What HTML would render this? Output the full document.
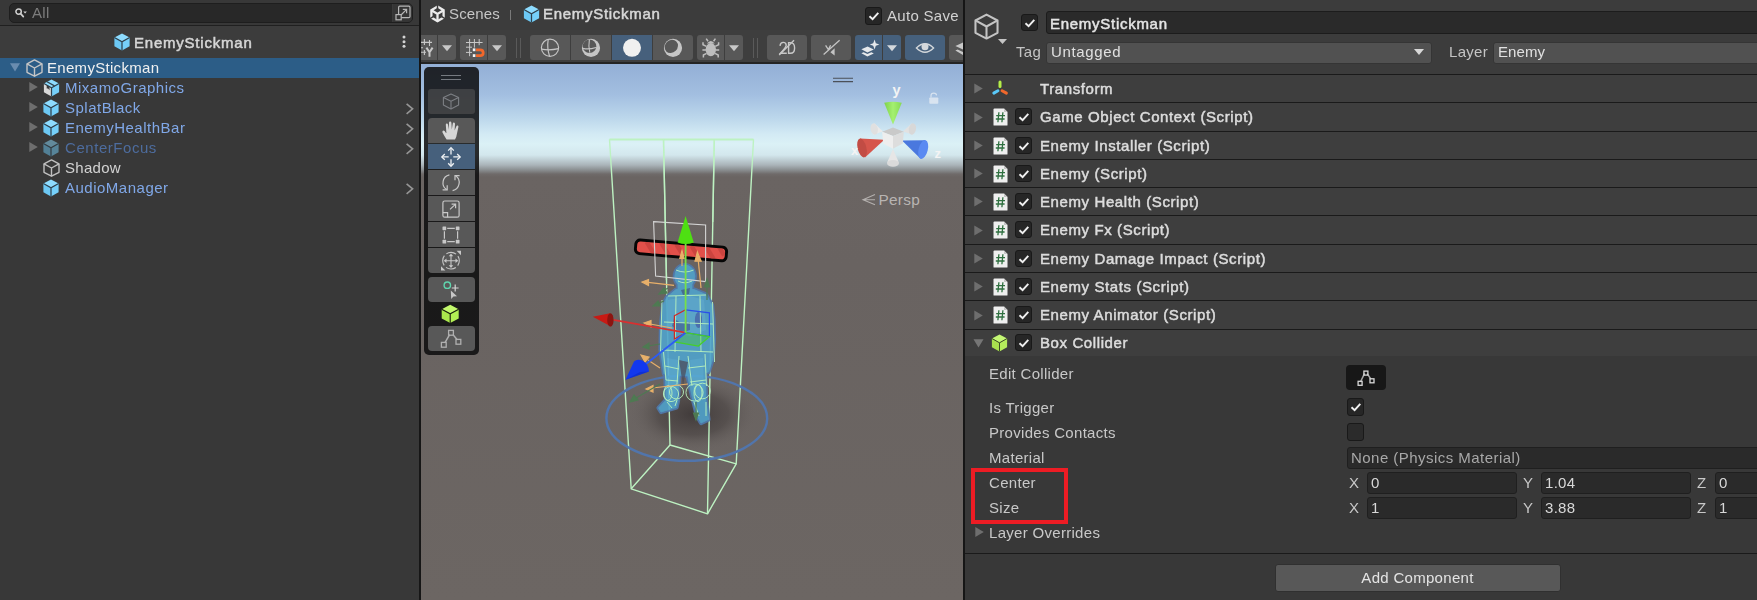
<!DOCTYPE html>
<html><head><meta charset="utf-8"><title>Unity Editor</title>
<style>
*{box-sizing:border-box;margin:0;padding:0}
html,body{width:1757px;height:600px;overflow:hidden;background:#383838}
body{position:relative;font-family:"Liberation Sans",sans-serif;font-size:15px;color:#c8c8c8;letter-spacing:.3px}
.abs,.abs>*{position:absolute}
.t{position:absolute;white-space:nowrap;line-height:20px;height:20px;will-change:transform}
.b{font-weight:400;-webkit-text-stroke:.5px currentColor;letter-spacing:.6px}
svg{position:absolute;overflow:visible}
/* hierarchy */
#hier{position:absolute;left:0;top:0;width:419px;height:600px;background:#383838}
.pf{color:#80a8e8;letter-spacing:.5px}
.pfd{color:#4d6c9e;letter-spacing:.55px}
/* scene */
#scene{position:absolute;left:421px;top:0;width:542px;height:600px;background:#3c3c3c;overflow:hidden}
/* inspector */
#insp{position:absolute;left:965px;top:0;width:792px;height:600px;background:#383838;overflow:hidden}
.hl{position:absolute;left:0;width:792px;height:1px;background:#1a1a1a}
.hrow{position:absolute;left:0;width:792px;background:#3e3e3e}
.cb{position:absolute;width:17px;height:17px;background:#262626;border:1px solid #191919;border-radius:3px}
.fld{position:absolute;background:#2a2a2a;border:1px solid #1f1f1f;border-radius:3px;height:22px}
.fld .t{left:2.6px;top:0}
.tb{position:absolute;top:35px;height:25px;background:#585858;border-radius:3px}
.tb.on,.ob.on{background:#46607c}
.tsep{position:absolute;top:38px;width:1px;height:20px;background:#5a5a5a}
.ob{position:absolute;left:7px;width:47px;height:25px;background:#585858}
</style></head><body>
<svg width="0" height="0" style="position:absolute"><defs>
 <g id="pfcube"><path d="M8 .4L15.6 4.5L8 8.8L.4 4.5z" fill="#8ddcff"/><path d="M.4 4.5L8 8.8V17.6L.4 13.3z" fill="#6cc8f4"/><path d="M15.6 4.5V13.3L8 17.6V8.8z" fill="#76d0fa"/><path d="M.4 4.5L8 8.8L15.6 4.5M8 8.8V17.6" fill="none" stroke="#30424e" stroke-width="1.25"/></g>
 <g id="gocube" fill="none" stroke-width="1.4" stroke-linejoin="round"><path d="M8.5 .9L16 4.9V13.3L8.5 17.2L1 13.3V4.9z"/><path d="M1 4.9L8.5 9L16 4.9M8.5 9V17.2"/></g>
 <g id="pfmodel"><path d="M8 .4L15.6 4.5L8 8.8L.4 4.5z" fill="#8ddcff"/><path d="M.4 4.5L8 8.8V17.6L.4 13.3z" fill="#d8d8d8"/><path d="M15.6 4.5V13.3L8 17.6V8.8z" fill="#76d0fa"/><path d="M.4 4.5L8 8.8L15.6 4.5M8 8.8V17.6" fill="none" stroke="#30424e" stroke-width="1.25"/><path d="M3.2 6.1L6 7.7V11.2L4.6 9.6L3.2 9.6z" fill="#3a3a3a"/><path d="M3.5 2.8L11 6.9" stroke="#30424e" stroke-width="1.25"/></g>
 <g id="unity"><g fill="none" stroke="#ececec" stroke-width="2.3" stroke-linejoin="miter"><path d="M7.5 1.6L13.6 5.2V12.6L7.5 16.2L1.4 12.6V5.2z"/><path d="M1.4 5.2L7.5 9L13.6 5.2M7.5 9V16.2"/></g><path d="M7.5 0V4.8M0 13.6L3.6 11.4M15 13.6L11.4 11.4" stroke="#3c3c3c" stroke-width="1.5" fill="none"/></g>
 <path id="tri" d="M.3 0L8.8 5L.3 10z" fill="#6e6e6e"/>
 <path id="chev" d="M1.6 .8L7.6 5.8L1.6 10.8" fill="none" stroke="#969696" stroke-width="1.6"/>
 <path id="chk" d="M1.5 5.2L4.6 8.2L10.3 1.8" fill="none" stroke="#f0f0f0" stroke-width="1.9"/>
</defs></svg>
<svg width="0" height="0" style="position:absolute"><defs>
 <g id="xform" fill="none" stroke-width="3" stroke-linecap="round"><path d="M9 2V6.4" stroke="#b4ee48"/><path d="M6.9 10.7L2.8 13.1" stroke="#5ac8f8"/><path d="M11.1 10.7L15.4 13.1" stroke="#f0682c"/></g>
 <g id="script"><path d="M1.5 .5H11L14.5 4V17Q14.5 17.5 14 17.5H1Q.5 17.5 .5 17V1.5Q.5 .5 1.5 .5z" fill="#efefef"/><path d="M11 .5V4H14.5z" fill="#c4c4c4"/><path d="M5.9 4.2L4.9 14.2M9.9 4.2L8.9 14.2M3.2 7.6H12M2.8 11H11.6" stroke="#2f7040" stroke-width="1.3" fill="none"/></g>
 <g id="gcube"><path d="M8 .4L15.6 4.5L8 8.8L.4 4.5z" fill="#c4f774"/><path d="M.4 4.5L8 8.8V17.6L.4 13.3z" fill="#a8e04e"/><path d="M15.6 4.5V13.3L8 17.6V8.8z" fill="#b4ec5c"/><path d="M.4 4.5L8 8.8L15.6 4.5M8 8.8V17.6" fill="none" stroke="#3c4c26" stroke-width="1"/></g>
 <g id="editcol" fill="none" stroke-width="1.3"><path d="M3.4 13L7.6 4.4M10.2 4.6L13.8 10" stroke-width="1.5" stroke-opacity=".75"/><rect x="6.9" y="2.1" width="4" height="4"/><rect x="1.1" y="12.3" width="4" height="4"/><rect x="13" y="9.8" width="4" height="4"/></g>
</defs></svg>
<div id="hier">
 <!-- search -->
 <div style="position:absolute;left:9px;top:3px;width:404px;height:20px;background:#282828;border:1px solid #1e1e1e;border-radius:5px"></div>
 <svg style="left:14px;top:7px" width="14" height="12" viewBox="0 0 14 12"><circle cx="4.6" cy="4.6" r="2.7" fill="none" stroke="#d0d0d0" stroke-width="1.5"/><path d="M6.6 6.6L9.3 9.6" stroke="#d0d0d0" stroke-width="1.7" stroke-linecap="round"/><path d="M9.3 4.6h3.6l-1.8 2z" fill="#d0d0d0"/></svg>
 <div class="t" style="left:32px;top:3px;color:#7c7c7c">All</div>
 <div style="position:absolute;left:392px;top:4px;width:1px;height:18px;background:#3a3a3a"></div>
 <div style="position:absolute;left:393px;top:4px;width:19px;height:18px;background:#353535;border-radius:0 4px 4px 0"></div>
 <svg style="left:395px;top:5px" width="16" height="16" viewBox="0 0 16 16"><g fill="none" stroke="#b6b6b6" stroke-width="1.2"><rect x="3.6" y="1.2" width="11.4" height="11.4" rx="1.2"/><rect x="1" y="9.6" width="5.2" height="5.2" fill="#353535"/><path d="M6 10L11.4 4.6M7.8 4.4H11.6V8.2"/></g></svg>
 <div style="position:absolute;left:0;top:24.5px;width:419px;height:1.2px;background:#202020"></div>
 <!-- header -->
 <div style="position:absolute;left:0;top:26px;width:419px;height:32px;background:#3c3c3c"></div>
 <svg style="left:114px;top:33px" width="16" height="18" viewBox="0 0 16 18"><use href="#pfcube"/></svg>
 <div class="t b" style="left:134px;top:33.4px;color:#d6d6d6;letter-spacing:.78px">EnemyStickman</div>
 <svg style="left:402px;top:35px" width="4" height="14" viewBox="0 0 4 14"><circle cx="2" cy="2" r="1.5" fill="#d4d4d4"/><circle cx="2" cy="6.7" r="1.5" fill="#d4d4d4"/><circle cx="2" cy="11.3" r="1.5" fill="#d4d4d4"/></svg>
 <!-- rows -->
 <div style="position:absolute;left:0;top:58px;width:419px;height:20px;background:#2c5d87"></div>
 <svg style="left:10px;top:63px" width="10" height="9" viewBox="0 0 10 9"><path d="M0 .3H10L5 8.6z" fill="#6a8caf"/></svg>
 <svg style="left:26px;top:59px" width="17" height="18" viewBox="0 0 17 18"><use href="#gocube" stroke="#c6c6c6"/></svg>
 <div class="t" style="left:47px;top:58px;color:#f0f0f0">EnemyStickman</div>

 <svg style="left:29px;top:82px" width="9" height="10" viewBox="0 0 9 10"><use href="#tri"/></svg>
 <svg style="left:43px;top:79px" width="17" height="18" viewBox="0 0 16 18"><use href="#pfmodel"/></svg>
 <div class="t pf" style="left:65px;top:78px">MixamoGraphics</div>

 <svg style="left:29px;top:102px" width="9" height="10" viewBox="0 0 9 10"><use href="#tri"/></svg>
 <svg style="left:43px;top:99px" width="16" height="18" viewBox="0 0 16 18"><use href="#pfcube"/></svg>
 <div class="t pf" style="left:65px;top:98px">SplatBlack</div>
 <svg style="left:405px;top:103px" width="8" height="11" viewBox="0 0 8 11"><use href="#chev"/></svg>

 <svg style="left:29px;top:122px" width="9" height="10" viewBox="0 0 9 10"><use href="#tri"/></svg>
 <svg style="left:43px;top:119px" width="16" height="18" viewBox="0 0 16 18"><use href="#pfcube"/></svg>
 <div class="t pf" style="left:65px;top:118px">EnemyHealthBar</div>
 <svg style="left:405px;top:123px" width="8" height="11" viewBox="0 0 8 11"><use href="#chev"/></svg>

 <svg style="left:29px;top:142px" width="9" height="10" viewBox="0 0 9 10"><use href="#tri"/></svg>
 <svg style="left:43px;top:139px;opacity:.5" width="16" height="18" viewBox="0 0 16 18"><use href="#pfcube"/></svg>
 <div class="t pfd" style="left:65px;top:138px">CenterFocus</div>
 <svg style="left:405px;top:143px" width="8" height="11" viewBox="0 0 8 11"><use href="#chev"/></svg>

 <svg style="left:43px;top:159px" width="17" height="18" viewBox="0 0 17 18"><use href="#gocube" stroke="#c0c0c0"/></svg>
 <div class="t" style="left:65px;top:158px;color:#d2d2d2">Shadow</div>

 <svg style="left:43px;top:179px" width="16" height="18" viewBox="0 0 16 18"><use href="#pfcube"/></svg>
 <div class="t pf" style="left:65px;top:178px">AudioManager</div>
 <svg style="left:405px;top:183px" width="8" height="11" viewBox="0 0 8 11"><use href="#chev"/></svg>
</div>
<div style="position:absolute;left:419px;top:0;width:2px;height:600px;background:#161616"></div>

<div id="scene">
<!-- all coordinates in page px via shifted svg -->
<div style="position:absolute;left:0;top:64px;width:542px;height:536px;background:linear-gradient(to bottom,#93afd6 0px,#a2bee0 30px,#bdd8ec 55px,#d3eaf4 70px,#dbf1f6 80px,#d3e7ed 91px,#aab4b9 101px,#8a8e90 106px,#6f6b6a 110px,#6a6462 113px,#696361 200px,#6c6663 536px)"></div>
<svg style="left:-421px;top:0" width="1757" height="600" viewBox="0 0 1757 600">
<defs>
 <radialGradient id="shd"><stop offset="0" stop-color="#3a3434" stop-opacity=".85"/><stop offset=".55" stop-color="#453f3e" stop-opacity=".55"/><stop offset="1" stop-color="#6a6462" stop-opacity="0"/></radialGradient>
 <filter id="bl1"><feGaussianBlur stdDeviation=".6"/></filter>
 <filter id="bl2"><feGaussianBlur stdDeviation="1.2"/></filter>
 <linearGradient id="gcone" x1="0" x2="1"><stop offset="0" stop-color="#7ed24c"/><stop offset=".5" stop-color="#a4f070"/><stop offset="1" stop-color="#86da54"/></linearGradient>
</defs>
<!-- shadow -->
<ellipse cx="693" cy="414" rx="64" ry="38" fill="url(#shd)"/>
<!-- box collider back edges -->
<g fill="none" stroke="#bdf2c2" stroke-width="1.4" stroke-linejoin="round">
 <path d="M609.5 139.6H753.5" stroke-width="2"/>
 <path d="M609.5 139.3L631.2 488.8L707.5 513.8L714.3 139.3"/>
 <path d="M663.5 139.3L670 445L736.2 463.8L753.5 139.3"/>
 <path d="M631.2 488.8L670 445M707.5 513.8L736.2 463.8"/>
</g>
<!-- blue circle -->
<ellipse cx="686.8" cy="418.2" rx="80.4" ry="42.6" fill="none" stroke="#5175ac" stroke-width="2.4" filter="url(#bl1)"/>
<!-- character -->
<g opacity=".9">
 <g fill="#5079ae" stroke="#5079ae" stroke-width="4.2" stroke-linejoin="round" filter="url(#bl1)">
  <ellipse cx="684.8" cy="276.2" rx="10" ry="11.2"/>
  <path d="M678 282H692V292H678z"/>
  <path d="M667 297L676 289.5H694L706 294.5L712 305L713.5 320L714 340L712.5 360L708.5 372L690 376L664 374L660.5 350L661 325L663 305z"/>
  <path d="M664 352L680.5 356L679 380L678 401L676.5 407.5L661 412L658.5 408L666 400L665.5 378z"/>
  <path d="M686.5 356L705 354L705.5 380L706 400L708.5 419.5L701 423L697 416L692 396L688 378z"/>
 </g>
 <g fill="#50a3cc" stroke="#50a3cc" stroke-width=".8" stroke-linejoin="round">
  <ellipse cx="684.8" cy="276.2" rx="10" ry="11.2"/>
  <path d="M678 282H692V292H678z"/>
  <path d="M667 297L676 289.5H694L706 294.5L712 305L713.5 320L714 340L712.5 360L708.5 372L690 376L664 374L660.5 350L661 325L663 305z"/>
  <path d="M664 352L680.5 356L679 380L678 401L676.5 407.5L661 412L658.5 408L666 400L665.5 378z"/>
  <path d="M686.5 356L705 354L705.5 380L706 400L708.5 419.5L701 423L697 416L692 396L688 378z"/>
 </g>
 <g filter="url(#bl1)">
  <path d="M668 300L690 296L704 300L706 330L690 336L668 330z" fill="#62b4da" fill-opacity=".55"/>
  <path d="M667 358L678 360L676 398L668 398z" fill="#5cb0d8" fill-opacity=".6"/>
  <path d="M690 360L703 358L704 398L694 396z" fill="#5cb0d8" fill-opacity=".6"/>
  <ellipse cx="698.5" cy="320" rx="3.6" ry="8" fill="#4466b0" fill-opacity=".85"/>
  <path d="M674 318Q682 326 690 322L690 330Q680 334 672 326z" fill="#3f5f9a" fill-opacity=".7"/>
  <path d="M681 290L690 288L689 294L683 295z" fill="#3f5a80" fill-opacity=".7"/>
  <path d="M679 360L683 386L688 362z" fill="#4a4a58" fill-opacity=".75"/>
 </g>
</g>
<!-- wire capsules -->
<g fill="none" stroke="#b8f2bc" stroke-width="1" stroke-opacity=".9">
 <circle cx="671" cy="394" r="7.6"/><circle cx="676.5" cy="392" r="7"/><ellipse cx="668" cy="393" rx="4" ry="7.4"/>
 <circle cx="694.5" cy="392.5" r="8.6"/><circle cx="702.5" cy="391" r="7.8"/><ellipse cx="698" cy="393" rx="4" ry="8.6"/>
 <path d="M663.5 352L666 380M679 356L677 384M688 356L692 386M705 354L706.5 386"/>
 <path d="M662 300L660.5 352M712.5 302L714.5 362M668 296L706 295M664 322L713 324M662 350L713 352M676 296L675 352M700 296L701 352"/>
 <path d="M665 366L679 369M666 380L678 381M688 368L705 366M690 382L706 380"/>
 <path d="M676 270Q684.6 274 693.6 270M678 281Q684.6 284.6 692 281"/>
 <path d="M667 402L672 408M677 400L675 406M694 402L699 416M706 402L706 416"/>
</g>
<!-- health bar -->
<g transform="rotate(5 681 250.4)"><rect x="634" y="242.2" width="94" height="16.4" rx="5.5" fill="#060606"/><rect x="636.9" y="245" width="88.2" height="10.8" rx="3.4" fill="#e2504a"/>
<clipPath id="hbc"><rect x="636.9" y="245" width="88.2" height="10.8" rx="3.4"/></clipPath><path clip-path="url(#hbc)" d="M646 245L654 255.8M661 245L669 255.8M676 245L684 255.8M691 245L699 255.8M706 245L714 255.8M719.5 245L724.4 251.6" stroke="#c4403c" stroke-width="4.4" stroke-opacity=".75"/></g>
<!-- white rect -->
<path d="M653.6 221.6L705.6 225V281.6L655.6 276z" fill="none" stroke="#d4d4d4" stroke-width="1.1"/>
<!-- small orange/green arrows -->
<g stroke="#e8b06a" stroke-width="1.2" fill="#e8b06a">
 <path d="M648 282.4L674 285.4" /><path d="M642 282L648.5 279.5V285.5z"/>
 <path d="M682 258V266"/><path d="M682 250.6L684.2 258.4H679.8z"/>
 <path d="M698.2 260L701 288"/><path d="M697.4 252L701.2 261.2H695z"/>
 <path d="M650 324L672 328"/><path d="M644 323L651 320.5V327z"/>
 <path d="M648 360L660 368"/><path d="M641 355L649 357L645 362z"/>
 <path d="M652 388L688 384"/><path d="M646 389L653 385.5V392z"/>
</g>
<g stroke="#4e7a52" stroke-width="1.2" fill="#4e7a52">
 <path d="M663 291L668 288"/><path d="M659 294L664 288L667 293z"/>
 <path d="M657 304L664 301"/><path d="M653 306L658 301L660 306z"/>
 <path d="M707 287V300"/><path d="M707 279L709.5 287H704.5z"/>
 <path d="M636 398L660 384"/><path d="M630 402L634 395L638 400z"/>
 <path d="M696 414V402"/><path d="M696 420L693.5 413H698.5z"/>
 <path d="M648 346L660 344"/><path d="M643 347L649 343V349z"/>
</g>
<!-- box collider front (over) -->
<g fill="none" stroke="#bdf2c2" stroke-width="1.4" stroke-opacity=".85">
 <path d="M663.5 139.3L666.5 280M714.3 139.3L712.8 222"/>
</g>
<!-- move gizmo -->
<g>
 <path d="M674.4 315.7L685.6 309.8V332.7L674.4 339z" fill="none" stroke="#d02626" stroke-width="1.2"/>
 <path d="M685.6 309.8L709.4 312.9V336.6L685.6 332.7z" fill="none" stroke="#2a50e8" stroke-width="1.2"/>
 <path d="M685.6 332.7L709.4 336.6L698.4 346L674.4 341.8z" fill="#46d028" fill-opacity=".35" stroke="#46d028" stroke-width="1.2"/>
 <path d="M613.3 319.9L685.6 332.7" stroke="#d83030" stroke-width="1.8"/>
 <path d="M592.8 316.8L610 313.2L611 326.6z" fill="#c81a14"/><ellipse cx="610.4" cy="319.9" rx="3.2" ry="6.7" fill="#8c1410"/>
 <path d="M646 364L685.6 332.7" stroke="#2c5cf4" stroke-width="1.8"/>
 <path d="M625.5 379.8L634 361.4Q637 358.6 642.4 360.6Q648.8 364.4 649 371.4z" fill="#1238ee"/><path d="M625.5 379.8L640 372L649 371.4z" fill="#0c2ac4" fill-opacity=".6"/>
 <path d="M685.6 243V332.7" stroke="#76e048" stroke-width="1.8"/>
 <path d="M685.6 216L693.8 242.4Q685.6 245.4 677.6 242.4z" fill="#4ee012"/>
</g>
<!-- orientation gizmo -->
<g>
 <path d="M833 78.3H853M833 81.6H853" stroke="#4b5058" stroke-width="1.1"/>
 <!-- gray cones -->
 <path d="M893 149L887.2 162.6Q893 168.4 898.8 162.6z" fill="#e6e6e6"/><ellipse cx="893" cy="163.4" rx="5.9" ry="3.4" fill="#dadada"/>
 <path d="M883 131.4L874.6 123.4Q869.6 128.6 873.4 134.8z" fill="#eaeaea"/><ellipse cx="874.2" cy="129" rx="3.6" ry="5.7" transform="rotate(-12 874.2 129)" fill="#e0e0e0"/>
 <path d="M903 131.4L911.6 123.4Q916.6 128.6 912.8 134.8z" fill="#e2e2e2"/><ellipse cx="912.4" cy="129" rx="3.6" ry="5.7" transform="rotate(12 912.4 129)" fill="#d8d8d8"/>
 <!-- green cone -->
 <path d="M893 124.6L884.2 102.8Q893 100.6 901.8 102.8z" fill="url(#gcone)"/>
 <!-- red cone -->
 <path d="M884.3 139.8L860 138.6Q855 148 865 157.4z" fill="#d6564c"/><ellipse cx="862" cy="148" rx="4.4" ry="9.6" transform="rotate(-14 862 148)" fill="#c24c44"/>
 <!-- blue cone -->
 <path d="M902 140.6L925 140.2Q930.6 150 920.6 158.8z" fill="#4a78de"/><ellipse cx="923.2" cy="149.5" rx="4.6" ry="9.6" transform="rotate(14 923.2 149.5)" fill="#5a8af2"/>
 <!-- cube -->
 <path d="M882.2 131.7L893 127.5L903.8 131.7L893 135.9z" fill="#c9c9c9"/><path d="M882.2 131.7L893 135.9V148.8L883.2 143.4z" fill="#eeeeee"/><path d="M903.8 131.7L902.8 143.4L893 148.8V135.9z" fill="#dddddd"/>
 <text x="892.4" y="95.4" font-family="Liberation Sans,sans-serif" font-size="14.5" font-weight="700" fill="#f4f4f4">y</text>
 <text x="851" y="155" font-family="Liberation Sans,sans-serif" font-size="13" font-weight="700" fill="#f4f4f4">x</text>
 <text x="934.5" y="157.8" font-family="Liberation Sans,sans-serif" font-size="13" font-weight="700" fill="#f4f4f4">z</text>
 <g fill="#e8eef4" fill-opacity=".75"><rect x="929.3" y="97.5" width="9" height="6.2" rx=".8"/><path d="M931 97.5V95.6Q931 93.2 933.8 93.2Q936.4 93.2 936.6 95.4" fill="none" stroke="#e8eef4" stroke-opacity=".75" stroke-width="1.2"/></g>
 <path d="M875 194.6L863 199.7L875 204.8M863.6 199.7H875" fill="none" stroke="#b4b0ae" stroke-width="1.1"/>
 <text x="878.4" y="205" font-family="Liberation Sans,sans-serif" font-size="15.4" fill="#b8b4b2">Persp</text>
</g>

</svg>
<!-- breadcrumb bar -->
<div style="position:absolute;left:0;top:0;width:542px;height:30px;background:#3c3c3c"></div>
<div style="position:absolute;left:0;top:30px;width:542px;height:32px;background:#3e3e3e"></div>
<div style="position:absolute;left:0;top:62px;width:542px;height:2px;background:#242424"></div>
<svg style="left:8.5px;top:4.7px" width="15" height="18" viewBox="0 0 15 18"><use href="#unity"/></svg>
<div class="t" style="left:27.5px;top:4px;color:#c6c6c6;letter-spacing:.15px">Scenes</div>
<div style="position:absolute;left:89px;top:10px;width:1.4px;height:10px;background:#7a7a7a"></div>
<svg style="left:102px;top:5px" width="17" height="18" viewBox="0 0 16 18"><use href="#pfcube"/></svg>
<div class="t b" style="left:121.8px;top:4px;color:#d8d8d8;letter-spacing:.7px">EnemyStickman</div>
<div class="cb" style="left:444px;top:7px;width:17px;height:18px;background:#262626"><svg style="left:2px;top:3px" width="12" height="10" viewBox="0 0 12 10"><use href="#chk"/></svg></div>
<div class="t" style="left:465.5px;top:6px;color:#d2d2d2">Auto Save</div>
<!-- toolbar buttons -->
<div class="tb" style="left:-6px;width:22px;border-radius:0"></div>
<div class="tb" style="left:17px;width:18px;border-radius:0 3px 3px 0"></div>
<div class="tb" style="left:39px;width:27px;border-radius:3px 0 0 3px"></div>
<div class="tb" style="left:67px;width:18px;border-radius:0 3px 3px 0"></div>
<div class="tsep" style="left:95px"></div><div class="tsep" style="left:99px"></div>
<div class="tb" style="left:109px;width:40px;border-radius:3px 0 0 3px"></div>
<div class="tb" style="left:150px;width:40px;border-radius:0"></div>
<div class="tb on" style="left:191px;width:40px;border-radius:0"></div>
<div class="tb" style="left:232px;width:40px;border-radius:0 3px 3px 0"></div>
<div class="tb" style="left:276px;width:27px;border-radius:3px 0 0 3px"></div>
<div class="tb" style="left:304px;width:18px;border-radius:0 3px 3px 0"></div>
<div class="tsep" style="left:332px"></div><div class="tsep" style="left:336px"></div>
<div class="tb" style="left:346px;width:40px"></div>
<div class="tb" style="left:390px;width:40px"></div>
<div class="tb on" style="left:434px;width:27px;border-radius:3px 0 0 3px"></div>
<div class="tb on" style="left:462px;width:18px;border-radius:0 3px 3px 0"></div>
<div class="tb on" style="left:484px;width:40px"></div>
<div class="tb" style="left:528px;width:30px;border-radius:3px 0 0 3px"></div>
<!-- toolbar icons -->
<svg style="left:0;top:35px" width="542" height="25" viewBox="421 35 542 25">
 <g fill="none" stroke="#c8c8c8" stroke-width="1.1">
  <!-- gridY -->
  <path d="M421 42.4H432M424.4 39V45M429.5 40V46M421 47.8H423M421 52.3H426M424.4 50V55" stroke-width="1.1"/>
  <path d="M426.4 47.6L429.5 52.2L432.6 47.6M429.5 52.2V56.8" stroke-width="2"/>
  <!-- snap grid -->
  <path d="M466 42.5H482.6M466 47.2H472M466 52.4H472M469.6 39V56.2M474.4 39V47.6M479.2 39V45.2" stroke-width="1"/>
 </g>
 <rect x="472.8" y="48.4" width="2.6" height="2.8" fill="#f4f4f4"/><rect x="472.8" y="54.2" width="2.6" height="2.8" fill="#f4f4f4"/>
 <path d="M476 49.8H480.2Q483.2 49.8 483.2 52.7Q483.2 55.6 480.2 55.6H476" fill="none" stroke="#f2672a" stroke-width="2.8"/>
 <g fill="#c8c8c8">
  <path d="M442 45.3H452L447 51.2z"/><path d="M492 45.3H502L497 51.2z"/><path d="M729 45.3H739L734 51.2z"/><path d="M887 45.3H897L892 51.2z" fill="#d4d8dc"/>
 </g>
 <!-- shading: wire sphere -->
 <g fill="none" stroke="#c4c4c4" stroke-width="1.2">
  <circle cx="550" cy="47.8" r="8.6"/><path d="M548.2 39.4Q546.8 48 549.6 56.4M541.5 49.2Q550 50.6 558.5 48.6"/>
 </g>
 <circle cx="591" cy="47.9" r="9.1" fill="#c6c6c6"/><circle cx="589.5" cy="46.3" r="6.8" fill="#585858"/>
 <path d="M589.4 39.4Q588.2 46 589.8 52.6M583 48.4Q589 49.8 596 47.4" fill="none" stroke="#c4c4c4" stroke-width="1.1"/>
 <circle cx="673" cy="47.9" r="9.1" fill="#c6c6c6"/><ellipse cx="671.3" cy="46.4" rx="7.1" ry="6.2" transform="rotate(-45 671.3 46.4)" fill="#585858"/>
 <circle cx="632" cy="47.8" r="9" fill="#f0f0f0"/>
 <!-- bug -->
 <g fill="#bebebe"><ellipse cx="710.8" cy="49.6" rx="5.2" ry="6.6"/><path d="M706.8 43.6Q710.8 38.6 714.8 43.6z"/></g>
 <g fill="none" stroke="#bebebe" stroke-width="1.5"><path d="M708 41.2L706.2 38.6M713.6 41.2L715.4 38.6M706.4 46.4L703 44.8V42.2M715.2 46.4L718.6 44.8V42.2M706.2 50H702.4M715.4 50H719.2M706.6 53.4L703.4 55V57.4M715 53.4L718.2 55V57.4"/></g>
 <!-- 2D -->
 <g fill="none" stroke="#c8c8c8" stroke-width="1.4"><path d="M780 45.8Q780.4 42.4 783.2 42.4Q786.2 42.4 786.2 45.2Q786.2 47.2 780.4 53.2H786.8"/><path d="M788.6 42.6V53.2H790.4Q794.6 53.2 794.6 47.9Q794.6 42.6 790.4 42.6z"/><path d="M779.2 55L794 40.2" stroke-width="1.4"/></g>
 <!-- light off -->
 <g fill="none" stroke="#c4c4c4" stroke-width="1.2"><path d="M825.6 45.4L828.4 49.6L830.6 45.2M823.6 54.6L839.6 40.2" stroke-width="1.3"/></g><path d="M834.6 48.2V55.4L830.4 52.2z" fill="#c4c4c4"/>
 <!-- fx -->
 <g fill="#e6e9ec"><path d="M861.4 49.2L867.6 46.6L873.8 49.6L867.4 52.6z"/><path d="M861.4 53.2L863.6 52.2L867.4 54L871.4 52.2L873.8 53.4L867.4 56.6z"/><path d="M874.6 39.4L875.8 43.2L879.4 44.4L875.8 45.8L874.6 49.4L873.2 45.8L869.8 44.4L873.2 43.2z"/></g>
 <!-- eye -->
 <path d="M916.4 48Q925 39.6 933.6 48Q925 56.4 916.4 48z" fill="none" stroke="#d4d8dc" stroke-width="1.3"/><circle cx="925" cy="46.8" r="3.5" fill="#d4d8dc"/>
 <!-- layers partial -->
 <g fill="#c8c8c8"><path d="M955.4 46L963 42.6V49.4z"/><path d="M955.4 50.6L957.6 49.6L963 52V55z"/></g>
</svg>
<!-- overlay tool panel -->
<div style="position:absolute;left:3px;top:67px;width:55px;height:288px;background:rgba(14,14,15,.87);border-radius:5px"></div>
<div style="position:absolute;left:20px;top:75px;width:20px;height:1px;background:#767a80"></div>
<div style="position:absolute;left:20px;top:79px;width:20px;height:1px;background:#767a80"></div>
<div class="ob" style="top:89px;height:25px;background:rgba(88,88,88,.55);border-radius:3px"></div>
<div class="ob" style="top:118px;border-radius:4px 4px 0 0"></div>
<div class="ob on" style="top:144px"></div>
<div class="ob" style="top:170px"></div>
<div class="ob" style="top:196px"></div>
<div class="ob" style="top:222px"></div>
<div class="ob" style="top:248px;border-radius:0 0 4px 4px"></div>
<div class="ob" style="top:277px;border-radius:4px"></div>
<div class="ob" style="top:326px;border-radius:4px"></div>
<svg style="left:0;top:64px" width="60" height="300" viewBox="421 64 60 300">
 <!-- cube (disabled) -->
 <g fill="none" stroke="#7c7f84" stroke-width="1.1" stroke-linejoin="round"><path d="M451 94L458.6 97.6V105L451 109L443.4 105V97.6z"/><path d="M443.4 97.6L451 101.2L458.6 97.6M451 101.2V109"/></g>
 <!-- hand -->
 <path d="M446.6 139.4Q444 135.6 442.4 132.2Q442.2 130.8 443.4 130.6Q444.6 130.6 446 133L446.4 133L445.8 124.8Q445.8 123.6 446.8 123.6Q447.8 123.6 448 124.8L448.8 129.8L449 122.8Q449 121.6 450.2 121.6Q451.2 121.6 451.4 122.8L451.8 129.6L452.8 123.6Q453 122.4 454 122.6Q455 122.8 455 124L454.6 130.4L456.4 126.2Q456.8 125.2 457.8 125.6Q458.6 126 458.4 127L457 133.6Q456.6 137 455 139.4z" fill="#d6d6d6"/>
 <!-- move -->
 <g fill="none" stroke="#eef1f4" stroke-width="1.3"><path d="M451 148V154.6M451 159.2V165.8M442 156.9H448.7M453.3 156.9H460"/><path d="M448.2 150.6L451 147.6L453.8 150.6M448.2 163.2L451 166.2L453.8 163.2M444.8 154.1L441.8 156.9L444.8 159.7M457.2 154.1L460.2 156.9L457.2 159.7"/></g>
 <!-- rotate -->
 <g fill="none" stroke="#c8c8c8" stroke-width="1.2"><path d="M449.4 174.8A8.2 8.2 0 0 0 446.6 189.6M452.6 190.6A8.2 8.2 0 0 0 455.6 175.8"/><path d="M442.6 189.8H447.2V185.2M459.6 175.6H455V180.2"/></g>
 <!-- scale -->
 <g fill="none" stroke="#c8c8c8" stroke-width="1.2"><rect x="442.9" y="201" width="16.2" height="16.2" rx="1.8"/><path d="M442.9 212.6H447.6V217.2"/><path d="M450 209.4L455.4 204.4M451.6 204.2H455.6V208.2"/></g>
 <!-- rect -->
 <g fill="none" stroke="#c8c8c8" stroke-width="1.2"><path d="M447.2 228.3H454.8M447.2 241.6H454.8M444.4 231.2V238.8M457.6 231.2V238.8"/></g><g fill="#c8c8c8"><rect x="442.5" y="226.5" width="3.7" height="3.7" rx=".6"/><rect x="455.8" y="226.5" width="3.7" height="3.7" rx=".6"/><rect x="442.5" y="239.8" width="3.7" height="3.7" rx=".6"/><rect x="455.8" y="239.8" width="3.7" height="3.7" rx=".6"/></g>
 <!-- transform -->
 <g fill="none" stroke="#c8c8c8" stroke-width="1.1"><circle cx="451" cy="260.7" r="8.3" stroke-dasharray="10.4 2.64" stroke-dashoffset="5.2"/><path d="M451 255V266.4M445.3 260.7H456.7"/></g><g fill="#c8c8c8"><path d="M451 253.4L453.2 256.2H448.8z"/><path d="M451 268L453.2 265.2H448.8z"/><path d="M443.7 260.7L446.5 258.5V262.9z"/><path d="M458.3 260.7L455.5 258.5V262.9z"/><path d="M461 250.8V255.2L456.6 250.8z"/><path d="M441 270.6V266.2L445.4 270.6z"/></g>
 <!-- custom tool -->
 <circle cx="447.3" cy="285.2" r="3.2" fill="none" stroke="#5fd6ae" stroke-width="1.4"/><path d="M455.2 284.6V291.4M451.8 288H458.6" stroke="#d4d4d4" stroke-width="1.2" fill="none"/><path d="M450.8 290.6L457 296.2L453.4 296.4L451.2 299z" fill="#c8c8c8"/>
 <!-- green cube -->
 <path d="M450.2 304.8L458.7 309.2L450.2 313.8L441.7 309.2z" fill="#c2f86c"/><path d="M441.7 309.2L450.2 313.8V323L441.7 318.4z" fill="#aae84c"/><path d="M458.7 309.2V318.4L450.2 323V313.8z" fill="#b2ee54"/><path d="M441.7 309.2L450.2 313.8L458.7 309.2M450.2 313.8V323" fill="none" stroke="#1c240e" stroke-width="1.1"/>
 <!-- edit collider -->
 <g fill="none" stroke="#b0b0b0" stroke-width="1.5"><path d="M445 342.6L449.6 334.6M453 334.6L457.2 339.8"/><rect x="448.6" y="330.4" width="4.8" height="4.8" stroke-width="1.3"/><rect x="441.4" y="342.4" width="4.8" height="4.8" stroke-width="1.3"/><rect x="456" y="339.4" width="4.8" height="4.8" stroke-width="1.3"/></g>
</svg>

</div>

<div id="insp">
<div style="position:absolute;left:0;top:0;width:792px;height:74px;background:#3c3c3c"></div>
<svg style="left:9px;top:13px" width="25" height="27" viewBox="0 0 17 18"><use href="#gocube" stroke="#c4c4c4" stroke-width="1.25"/></svg>
<svg style="left:33px;top:39px" width="9" height="5" viewBox="0 0 9 5"><path d="M0 0H9L4.5 5z" fill="#c4c4c4"/></svg>
<div class="cb" style="left:56px;top:14px"><svg style="left:2px;top:3px" width="12" height="10" viewBox="0 0 12 10"><use href="#chk"/></svg></div>
<div style="position:absolute;left:81px;top:11px;width:720px;height:23px;background:#2a2a2a;border:1px solid #1c1c1c;border-radius:3px"></div>
<div class="t b" style="left:85px;top:14.2px;color:#e4e4e4;letter-spacing:.72px">EnemyStickman</div>
<div class="t" style="left:51px;top:42px;color:#c4c4c4">Tag</div>
<div style="position:absolute;left:81px;top:41.5px;width:385.5px;height:22.5px;background:#515151;border:1px solid #353535;border-radius:3px"></div>
<div class="t" style="left:86px;top:42px;color:#e0e0e0;letter-spacing:.65px">Untagged</div>
<svg style="left:449px;top:49px" width="10" height="6" viewBox="0 0 10 6"><path d="M0 0H10L5 6z" fill="#d8d8d8"/></svg>
<div class="t" style="left:484px;top:42px;color:#c4c4c4">Layer</div>
<div style="position:absolute;left:528px;top:41.5px;width:280px;height:22.5px;background:#515151;border:1px solid #353535;border-radius:3px"></div>
<div class="t" style="left:533px;top:42px;color:#e0e0e0;letter-spacing:.1px">Enemy</div>
<div class="hrow" style="top:74px;height:28px"></div>
<div class="hl" style="top:74px"></div>
<svg style="left:9px;top:83.0px" width="9" height="11" viewBox="0 0 9 10"><use href="#tri"/></svg>
<svg style="left:26px;top:80.0px" width="18" height="16" viewBox="0 0 18 16"><use href="#xform"/></svg>
<div class="t b" style="left:75px;top:78.5px;color:#dcdcdc">Transform</div>
<div class="hrow" style="top:102px;height:29px"></div>
<div class="hl" style="top:102px"></div>
<svg style="left:9px;top:111.5px" width="9" height="11" viewBox="0 0 9 10"><use href="#tri"/></svg>
<svg style="left:27.5px;top:108.0px" width="15" height="18" viewBox="0 0 15 18"><use href="#script"/></svg>
<div class="cb" style="left:50px;top:108.0px"><svg style="left:2px;top:3px" width="12" height="10" viewBox="0 0 12 10"><use href="#chk"/></svg></div>
<div class="t b" style="left:75px;top:107.0px;color:#dcdcdc">Game Object Context (Script)</div>
<div class="hrow" style="top:131px;height:28px"></div>
<div class="hl" style="top:131px"></div>
<svg style="left:9px;top:140.0px" width="9" height="11" viewBox="0 0 9 10"><use href="#tri"/></svg>
<svg style="left:27.5px;top:136.5px" width="15" height="18" viewBox="0 0 15 18"><use href="#script"/></svg>
<div class="cb" style="left:50px;top:136.5px"><svg style="left:2px;top:3px" width="12" height="10" viewBox="0 0 12 10"><use href="#chk"/></svg></div>
<div class="t b" style="left:75px;top:135.5px;color:#dcdcdc">Enemy Installer (Script)</div>
<div class="hrow" style="top:159px;height:28px"></div>
<div class="hl" style="top:159px"></div>
<svg style="left:9px;top:168.0px" width="9" height="11" viewBox="0 0 9 10"><use href="#tri"/></svg>
<svg style="left:27.5px;top:164.5px" width="15" height="18" viewBox="0 0 15 18"><use href="#script"/></svg>
<div class="cb" style="left:50px;top:164.5px"><svg style="left:2px;top:3px" width="12" height="10" viewBox="0 0 12 10"><use href="#chk"/></svg></div>
<div class="t b" style="left:75px;top:163.5px;color:#dcdcdc">Enemy (Script)</div>
<div class="hrow" style="top:187px;height:28px"></div>
<div class="hl" style="top:187px"></div>
<svg style="left:9px;top:196.0px" width="9" height="11" viewBox="0 0 9 10"><use href="#tri"/></svg>
<svg style="left:27.5px;top:192.5px" width="15" height="18" viewBox="0 0 15 18"><use href="#script"/></svg>
<div class="cb" style="left:50px;top:192.5px"><svg style="left:2px;top:3px" width="12" height="10" viewBox="0 0 12 10"><use href="#chk"/></svg></div>
<div class="t b" style="left:75px;top:191.5px;color:#dcdcdc">Enemy Health (Script)</div>
<div class="hrow" style="top:215px;height:29px"></div>
<div class="hl" style="top:215px"></div>
<svg style="left:9px;top:224.5px" width="9" height="11" viewBox="0 0 9 10"><use href="#tri"/></svg>
<svg style="left:27.5px;top:221.0px" width="15" height="18" viewBox="0 0 15 18"><use href="#script"/></svg>
<div class="cb" style="left:50px;top:221.0px"><svg style="left:2px;top:3px" width="12" height="10" viewBox="0 0 12 10"><use href="#chk"/></svg></div>
<div class="t b" style="left:75px;top:220.0px;color:#dcdcdc">Enemy Fx (Script)</div>
<div class="hrow" style="top:244px;height:28px"></div>
<div class="hl" style="top:244px"></div>
<svg style="left:9px;top:253.0px" width="9" height="11" viewBox="0 0 9 10"><use href="#tri"/></svg>
<svg style="left:27.5px;top:249.5px" width="15" height="18" viewBox="0 0 15 18"><use href="#script"/></svg>
<div class="cb" style="left:50px;top:249.5px"><svg style="left:2px;top:3px" width="12" height="10" viewBox="0 0 12 10"><use href="#chk"/></svg></div>
<div class="t b" style="left:75px;top:248.5px;color:#dcdcdc">Enemy Damage Impact (Script)</div>
<div class="hrow" style="top:272px;height:28px"></div>
<div class="hl" style="top:272px"></div>
<svg style="left:9px;top:281.0px" width="9" height="11" viewBox="0 0 9 10"><use href="#tri"/></svg>
<svg style="left:27.5px;top:277.5px" width="15" height="18" viewBox="0 0 15 18"><use href="#script"/></svg>
<div class="cb" style="left:50px;top:277.5px"><svg style="left:2px;top:3px" width="12" height="10" viewBox="0 0 12 10"><use href="#chk"/></svg></div>
<div class="t b" style="left:75px;top:276.5px;color:#dcdcdc">Enemy Stats (Script)</div>
<div class="hrow" style="top:300px;height:29px"></div>
<div class="hl" style="top:300px"></div>
<svg style="left:9px;top:309.5px" width="9" height="11" viewBox="0 0 9 10"><use href="#tri"/></svg>
<svg style="left:27.5px;top:306.0px" width="15" height="18" viewBox="0 0 15 18"><use href="#script"/></svg>
<div class="cb" style="left:50px;top:306.0px"><svg style="left:2px;top:3px" width="12" height="10" viewBox="0 0 12 10"><use href="#chk"/></svg></div>
<div class="t b" style="left:75px;top:305.0px;color:#dcdcdc">Enemy Animator (Script)</div>
<div class="hrow" style="top:329px;height:27px"></div>
<div class="hl" style="top:329px"></div>
<svg style="left:8px;top:338.5px" width="11" height="9" viewBox="0 0 10 9"><path d="M0 .3H10L5 8.6z" fill="#767676"/></svg>
<svg style="left:26px;top:334.0px" width="17" height="18" viewBox="0 0 16 18"><use href="#gcube"/></svg>
<div class="cb" style="left:50px;top:334.0px"><svg style="left:2px;top:3px" width="12" height="10" viewBox="0 0 12 10"><use href="#chk"/></svg></div>
<div class="t b" style="left:75px;top:333.0px;color:#dcdcdc">Box Collider</div>
<div class="t" style="left:24px;top:363.8px;color:#c8c8c8">Edit Collider</div>
<div class="t" style="left:24px;top:397.8px;color:#c8c8c8">Is Trigger</div>
<div class="t" style="left:24px;top:422.8px;color:#c8c8c8">Provides Contacts</div>
<div class="t" style="left:24px;top:447.8px;color:#c8c8c8">Material</div>
<div class="t" style="left:24px;top:472.8px;color:#c8c8c8">Center</div>
<div class="t" style="left:24px;top:497.8px;color:#c8c8c8">Size</div>
<div class="t" style="left:24px;top:522.8px;color:#c8c8c8">Layer Overrides</div>
<svg style="left:10px;top:527px" width="9" height="10" viewBox="0 0 9 10"><use href="#tri"/></svg>
<div style="position:absolute;left:381px;top:365px;width:40px;height:25px;background:#171717;border-radius:4px"></div>
<svg style="left:392px;top:369px" width="18" height="17" viewBox="0 0 18 17"><use href="#editcol" stroke="#d8d8d8"/></svg>
<div class="cb" style="left:382px;top:398.3px;height:17.6px"><svg style="left:2px;top:3px" width="12" height="10" viewBox="0 0 12 10"><use href="#chk"/></svg></div>
<div class="cb" style="left:382px;top:423.2px;height:17.6px;background:#2b2b2b"></div>
<div class="fld" style="left:382px;top:447px;width:420px"><div class="t" style="color:#a8a8a8;letter-spacing:.46px;left:3.4px">None (Physics Material)</div></div>
<div class="t" style="left:384px;top:473px;color:#c8c8c8">X</div>
<div class="fld" style="left:402px;top:472px;width:150px"><div class="t" style="color:#d8d8d8">0</div></div>
<div class="t" style="left:558px;top:473px;color:#c8c8c8">Y</div>
<div class="fld" style="left:576px;top:472px;width:150px"><div class="t" style="color:#d8d8d8">1.04</div></div>
<div class="t" style="left:732px;top:473px;color:#c8c8c8">Z</div>
<div class="fld" style="left:750px;top:472px;width:60px"><div class="t" style="color:#d8d8d8">0</div></div>
<div class="t" style="left:384px;top:498px;color:#c8c8c8">X</div>
<div class="fld" style="left:402px;top:497px;width:150px"><div class="t" style="color:#d8d8d8">1</div></div>
<div class="t" style="left:558px;top:498px;color:#c8c8c8">Y</div>
<div class="fld" style="left:576px;top:497px;width:150px"><div class="t" style="color:#d8d8d8">3.88</div></div>
<div class="t" style="left:732px;top:498px;color:#c8c8c8">Z</div>
<div class="fld" style="left:750px;top:497px;width:60px"><div class="t" style="color:#d8d8d8">1</div></div>
<div style="position:absolute;left:6px;top:468px;width:97px;height:56px;border:4.5px solid #ed1c24"></div>
<div class="hl" style="top:553px"></div>
<div style="position:absolute;left:309.5px;top:563.6px;width:286px;height:28.4px;background:#585858;border:1px solid #303030;border-radius:3px"></div>
<div class="t" style="left:310px;top:568px;width:285px;text-align:center;color:#e4e4e4">Add Component</div>
</div>
<div style="position:absolute;left:963px;top:0;width:2px;height:600px;background:#161616"></div>
</body></html>
